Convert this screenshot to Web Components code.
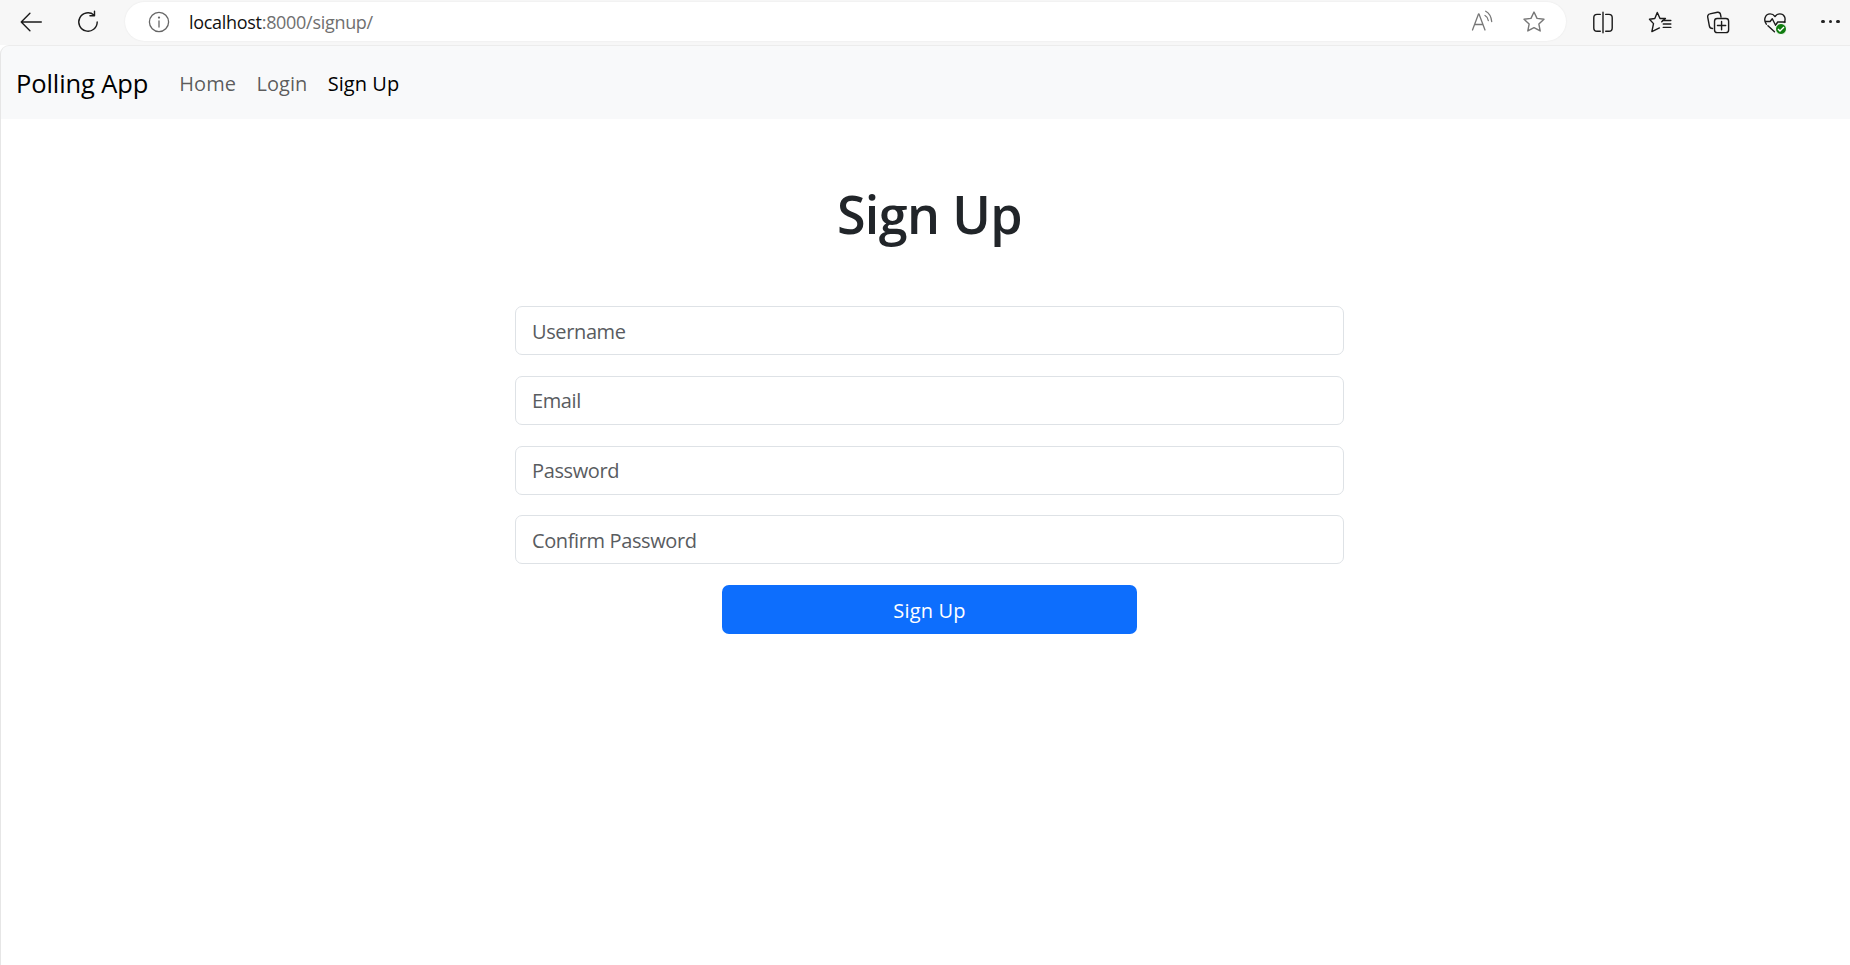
<!DOCTYPE html>
<html lang="en"><head><meta charset="utf-8"><title>Sign Up</title>
<style>
html,body{margin:0;height:100%;background:#fff;overflow:hidden}
body{display:flex;flex-direction:column;height:965px;font-family:"Open Sans","Noto Sans",sans-serif}
</style></head><body>
<browser-bar></browser-bar>
<app-nav></app-nav>
<signup-page></signup-page>
<script>
function def(name,html){customElements.define(name,class extends HTMLElement{constructor(){super();this.attachShadow({mode:'open'}).innerHTML=html}})}
const ic=(w,inner,cs='',sw=1.3)=>`<svg width="${w}" height="${w}" viewBox="0 0 24 24" fill="none" stroke="currentColor" stroke-width="${sw}" stroke-linecap="round" stroke-linejoin="round" style="${cs}">${inner}</svg>`;
def('browser-bar',`<style>
:host{display:flex;align-items:center;height:45px;background:#f7f7f7;box-sizing:border-box;padding:0 0 2px 18px;color:#1b1b1b;flex:none}
.nav{display:flex;gap:31px;align-items:center;margin-right:24px}
.nav svg,.tools svg{display:block}
.pill{flex:none;width:1441px;height:39px;background:#fff;border-radius:20px;box-shadow:0 0 2px rgba(0,0,0,.08);display:flex;align-items:center;box-sizing:border-box;padding:0 19.5px 0 21.5px}
.url{font:18px "Open Sans",sans-serif;letter-spacing:-.3px;margin-left:18.5px;color:#6f6f6f;flex:1;white-space:nowrap}
.url b{font-weight:400;color:#111}
.tools{display:flex;align-items:center;gap:31.6px;margin-left:23.5px}
.in{display:flex;gap:26.5px;align-items:center;color:#777}
.more{display:flex;gap:4px;margin-left:1.5px}.more i{width:3.4px;height:3.4px;border-radius:50%;background:#222}
</style>
<div class="nav">
${ic(26,'<path d="M21.500 12H3M11 4l-8 8 8 8"/>')}
${ic(26,'<path d="M20.500 12a8.500 8.500 0 1 1-3-6.500M18 2v4.200h-4.200"/>')}
</div>
<div class="pill">
${ic(24,'<circle cx="12" cy="12" r="9.600"/><path d="M12 11v6"/><circle cx="12" cy="7.600" r=".5" fill="currentColor"/>','color:#666')}
<span class="url"><b>localhost</b>:8000/signup/</span>
<span class="in">
${ic(24,'<path d="M2.500 20 8.500 4h.5l6 16M4.800 14.500h8M15 5.500c1.700.9 3 2.700 3.300 5M15.700 1.200c3.200 1.700 5.500 5.500 6 10.300"/>')}
${ic(26,'<path d="M12 2.800l2.800 5.900 6.400.8-4.700 4.400 1.200 6.400L12 17.200l-5.700 3.100 1.200-6.400-4.700-4.400 6.400-.8z"/>')}
</span></div>
<div class="tools">
${ic(26,'<path d="M12 3v19M9.500 5H6.500A3 3 0 0 0 3.500 8v9.500a3 3 0 0 0 3 3h3M14.500 5h3a3 3 0 0 1 3 3v9.500a3 3 0 0 1-3 3h-3"/>')}
${ic(26,'<path d="M13.600 11.800 17 8.800H12L9.500 3.200 7.200 8.800 2.300 9.400 6 13.500 4.500 20.800 11.500 17.500M14.300 10.600H22M15 13.800h7M15 17h7"/>')}
${ic(26,'<path d="M14.800 7.500 14.300 5A2.500 2.500 0 0 0 11.500 3L4.500 4.500A2.500 2.500 0 0 0 2.500 7.500L4 15.500A3 3 0 0 0 7 18"/><rect x="8.800" y="8.800" width="13" height="13" rx="2.500"/><path d="M15.300 11.500v7.600M11.500 15.300h7.600"/>')}
<span style="position:relative;display:block;width:26px;height:26px">
${ic(26,'<path d="M4 14C1 10 3 4.500 7.500 4.500c2 0 3.500 1 4.500 2.500 1-1.500 2.500-2.500 4.500-2.500 4 0 6 4 4 8M5.500 15.500l6 5.500M2.800 11.500H7.500L9.500 9l3 6 2-3h7"/>')}
<span style="position:absolute;right:1.5px;bottom:0;width:12px;height:12px;border-radius:50%;background:#107c10;border:1px solid #fff;box-sizing:border-box;display:flex;align-items:center;justify-content:center"><svg width="8" height="8" viewBox="0 0 8 8" fill="none" stroke="#fff" stroke-width="1.400"><path d="M1 4l2 2 4-4"/></svg></span></span>
<span class="more"><i></i><i></i><i></i></span>
</div>`);
def('app-nav',`<style>
:host{display:flex;align-items:center;height:74px;background:#f8f9fa;box-sizing:border-box;padding:1px 0 0 15px;flex:none;border-radius:9px 0 0 0;border-top:1px solid #ececec;border-left:1px solid #e6e6e6}
.b{font-size:25.5px;letter-spacing:-.1px;color:#000;margin-right:31px}
a{font-size:20px;letter-spacing:.03px;color:rgba(0,0,0,.65);margin-right:20.5px;text-decoration:none}
a.on{color:#000}
</style><span class="b">Polling App</span><a>Home</a><a>Login</a><a class="on">Sign Up</a>`);
def('form-input',`<style>
:host{display:flex;align-items:center;width:829px;height:49px;box-sizing:border-box;border:1px solid #dee2e6;border-radius:7px;background:#fff;padding:1px 16px 0}
span{font-size:20px;letter-spacing:-.38px;color:#595c5f}
</style><span><slot></slot></span>`);
def('signup-page',`<style>
:host{display:flex;flex:1;flex-direction:column;align-items:center;border-left:1px solid #e6e6e6;box-sizing:border-box;padding-left:8px}
h1{font-size:52px;font-weight:600;letter-spacing:-.6px;line-height:72px;color:#212529;margin:59px 0 56px}
.f{display:flex;flex-direction:column;align-items:center;gap:20.75px}
.btn{width:415px;height:49px;background:#0d6efd;color:#fff;border-radius:7px;display:flex;align-items:center;justify-content:center;font-size:20px;letter-spacing:.2px;padding-top:1px;box-sizing:border-box}
</style><h1>Sign Up</h1><div class="f">
<form-input>Username</form-input><form-input>Email</form-input><form-input>Password</form-input><form-input>Confirm Password</form-input>
<div class="btn">Sign Up</div></div>`);
</script></body></html>
